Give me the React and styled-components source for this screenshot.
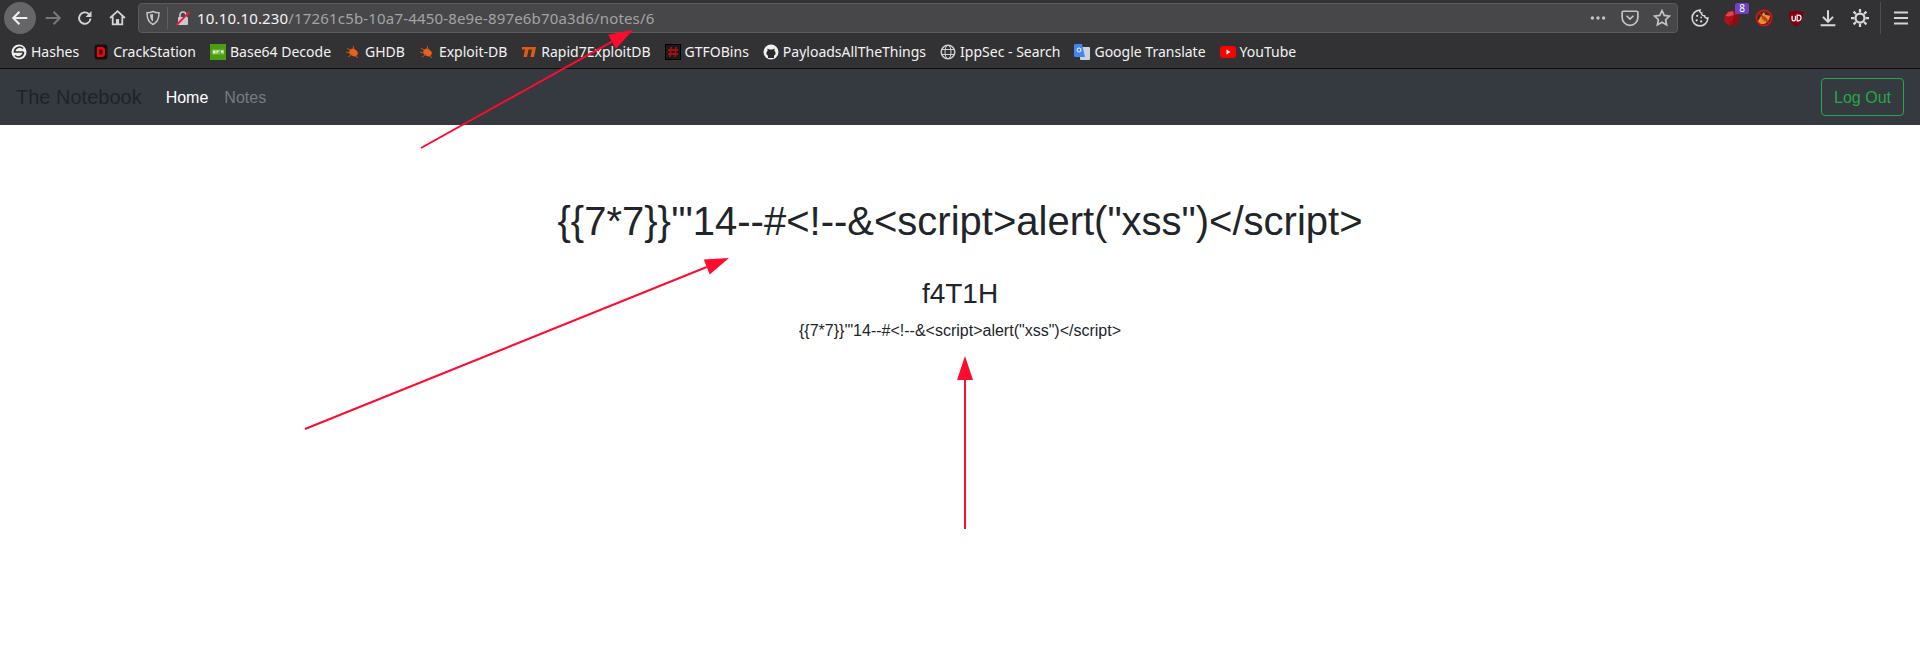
import React from "react";
import styled, { createGlobalStyle } from "styled-components";

const Global = createGlobalStyle`
  html, body { margin: 0; padding: 0; background: #fff; }
  body { font-family: "Liberation Sans", Arial, sans-serif; }
`;

const Page = styled.div`
  position: relative;
  width: 1920px;
  height: 652px;
  overflow: hidden;
  background: #fff;
`;

const Toolbar = styled.div`
  height: 35px;
  background: #323234;
  display: flex;
  align-items: center;
  padding: 0 0 0 4px;
  box-sizing: border-box;
`;

const NavBtn = styled.div`
  width: ${(p) => p.$w || 32}px;
  height: 32px;
  flex: none;
  display: flex;
  align-items: center;
  justify-content: center;
  color: ${(p) => p.$color || "#d4d4d6"};
  border-radius: 50%;
  background: ${(p) => p.$bg || "transparent"};
`;

const UrlBar = styled.div`
  flex: none;
  margin-left: 5px;
  width: 1540px;
  height: 30px;
  box-sizing: border-box;
  background: #474749;
  border: 1px solid #5b5b5d;
  border-radius: 4px;
  display: flex;
  align-items: center;
  padding: 0 6px 0 0;
`;

const Shield = styled.div`
  width: 28px;
  height: 100%;
  flex: none;
  display: flex;
  align-items: center;
  justify-content: center;
`;

const Sep = styled.div`
  width: 1px;
  height: 22px;
  background: #5f5f61;
  flex: none;
`;

const Lock = styled.div`
  width: 29px;
  flex: none;
  display: flex;
  align-items: center;
  justify-content: center;
`;

const Url = styled.div`
  flex: 1;
  font-family: "Noto Sans", sans-serif;
  font-size: 15px;
  letter-spacing: 0.17px;
  color: #a3a3a5;
  white-space: nowrap;
  & b { font-weight: 400; color: #f4f4f5; }
`;

const UrlIcons = styled.div`
  display: flex;
  align-items: center;
  gap: 14px;
  color: #c4c4c6;
`;

const Ext = styled.div`
  width: 32px;
  height: 32px;
  flex: none;
  display: flex;
  align-items: center;
  justify-content: center;
  position: relative;
`;

const ExtRow = styled.div`
  display: flex;
  align-items: center;
  margin-left: 6px;
  color: #d8d8da;
`;

const Badge = styled.span`
  position: absolute;
  top: 1px;
  right: -1px;
  background: #6f42c1;
  color: #fff;
  font-family: "Noto Sans", sans-serif;
  font-size: 10px;
  line-height: 11px;
  padding: 0 4px;
  border-radius: 2px;
`;

const Divider = styled.div`
  width: 1px;
  height: 32px;
  background: #4d4d4f;
  margin: 0 0 0 4px;
  flex: none;
`;

const Bookmarks = styled.div`
  height: 34px;
  background: #323234;
  display: flex;
  align-items: center;
  padding: 0 0 0 11px;
  box-sizing: border-box;
  gap: 14px;
  border-bottom: 1px solid #0c0c0d;
`;

const Mark = styled.div`
  display: flex;
  align-items: center;
  gap: 4px;
  font-family: "Noto Sans", sans-serif;
  font-size: 14px;
  color: #f2f2f3;
  white-space: nowrap;
`;

const Navbar = styled.nav`
  height: 56px;
  background: #343a40;
  display: flex;
  align-items: center;
  padding: 0 16px;
  box-sizing: border-box;
`;

const Brand = styled.div`
  font-size: 20px;
  color: #1f2327;
  margin-right: 16px;
`;

const NavLink = styled.div`
  font-size: 16px;
  padding: 1px 8px 0;
  color: ${(p) => (p.$active ? "#ffffff" : "#777c81")};
`;

const LogOut = styled.button`
  margin-left: auto;
  height: 38px;
  padding: 1px 12px 0;
  font: 16px "Liberation Sans", Arial, sans-serif;
  background: transparent;
  color: #28a745;
  border: 1px solid #28a745;
  border-radius: 4px;
`;

const Content = styled.main`
  text-align: center;
  color: #212529;
  padding-top: 72px;
`;

const Title = styled.h1`
  font-size: 40px;
  font-weight: 400;
  line-height: 48px;
  margin: 0 0 32px;
`;

const Author = styled.h3`
  font-size: 28px;
  font-weight: 400;
  line-height: 34px;
  margin: 0 0 8px;
`;

const Body = styled.p`
  font-size: 16px;
  line-height: 24px;
  margin: 0;
`;

const Arrows = styled.svg`
  position: absolute;
  inset: 0;
  pointer-events: none;
`;

const Arrow = ({ x1, y1, x2, y2 }) => {
  const a = Math.atan2(y2 - y1, x2 - x1);
  const L = 24, W = 8;
  const bx = x2 - L * Math.cos(a), by = y2 - L * Math.sin(a);
  const nx = -Math.sin(a) * W, ny = Math.cos(a) * W;
  return (
    <g>
      <line x1={x1} y1={y1} x2={bx} y2={by} stroke="#ff0b2d" strokeWidth="2" />
      <polygon points={`${x2},${y2} ${bx + nx},${by + ny} ${bx - nx},${by - ny}`} fill="#ff0b2d" />
    </g>
  );
};

const S = ({ size = 16, children, vb = "0 0 16 16" }) => (
  <svg width={size} height={size} viewBox={vb} style={{ display: "block" }}>{children}</svg>
);

const Bug = () => (
  <S>
    <ellipse cx="8.500" cy="8.500" rx="4.500" ry="3.500" fill="#e8601a" transform="rotate(35 8.500 8.500)" />
    <path d="M2 4l3 2M1 8l4 1M3 13l3-2M8 2l1 3M13 14l-2-2" stroke="#c9541a" strokeWidth="1" fill="none" />
  </S>
);

const marks = [
  ["Hashes", <S key="h"><circle cx="8" cy="8" r="7.500" fill="#f0f0f0" /><path d="M12 4.500A5 5 0 0 0 3.500 8h9M4 11.500A5 5 0 0 0 12.500 8" stroke="#323234" strokeWidth="1.700" fill="none" /></S>],
  ["CrackStation", <S key="c"><rect x="1.500" y="0.500" width="13" height="15" rx="3" fill="#111" /><path fillRule="evenodd" d="M4 3h4.500a3.500 3.500 0 0 1 3.500 3.500v3A3.500 3.500 0 0 1 8.500 13H4zM6.500 5.500v5h1.500a1.500 1.500 0 0 0 1.500-1.500V7A1.500 1.500 0 0 0 8 5.500z" fill="#f00" /></S>],
  ["Base64 Decode", <S key="b"><rect width="16" height="16" fill="#4b9e14" /><rect x="2" y="5.500" width="12" height="5" fill="#8fce5e" opacity=".6" /><path d="M3 6.500h2.500v3H3zM6.500 6.500h3v1h-2v2h-1zM11 6.500v2h1.500v1h1v-3z" fill="#f4ffe8" /></S>],
  ["GHDB", <Bug key="g" />],
  ["Exploit-DB", <Bug key="e" />],
  ["Rapid7ExploitDB", <S key="r"><path d="M1 3h14l-2 10H9.500l1.500-7.500H7.500L6 13H2.500L4 5.500H1z" fill="#e5590f" /></S>],
  ["GTFOBins", <S key="t"><rect x=".5" y=".5" width="15" height="15" fill="#1a1a1a" stroke="#000" /><path d="M6 3L5 13M11 3l-1 10M3 6h10M3 10h10" stroke="#a11010" strokeWidth="1.800" /></S>],
  ["PayloadsAllTheThings", <S key="p"><circle cx="8" cy="8" r="7.500" fill="#f0f0f0" /><path d="M5 14v-2.500C3 11 3 8 4.500 7V4.500l2 1h3l2-1V7c1.500 1 1.500 4-.5 4.500V14z" fill="#2a2a2c" /></S>],
  ["IppSec - Search", <S key="i"><circle cx="8" cy="8" r="6.800" fill="none" stroke="#cfcfd1" strokeWidth="1.500" /><ellipse cx="8" cy="8" rx="3" ry="6.800" fill="none" stroke="#cfcfd1" /><path d="M1.500 5.500h13M1.500 10.500h13" stroke="#cfcfd1" /></S>],
  ["Google Translate", <S key="t2"><rect x="6" y="3" width="10" height="13" rx="1" fill="#cfd4da" /><path d="M0 1.500A1.500 1.500 0 0 1 1.500 0H8l3 13H1.500A1.500 1.500 0 0 1 0 11.500z" fill="#4285f4" /><circle cx="5" cy="6" r="2" fill="none" stroke="#fff" strokeWidth="1" /></S>],
  ["YouTube", <S key="y"><rect y="2" width="16" height="12" rx="3" fill="#f00" /><path d="M6.500 5.500v5l4-2.500z" fill="#fff" /></S>],
];

export default function App() {
  return (
    <Page>
      <Global />
      <Toolbar>
        <NavBtn $bg="#666668" $color="#efeff0">
          <S size={18}><path d="M14.500 8H2.500M7.500 2.500L2 8l5.500 5.500" stroke="currentColor" strokeWidth="1.800" fill="none" /></S>
        </NavBtn>
        <NavBtn $w={33} $color="#77777a">
          <S size={18}><path d="M1.500 8h12M8.500 2.500L14 8l-5.500 5.500" stroke="currentColor" strokeWidth="1.800" fill="none" /></S>
        </NavBtn>
        <NavBtn>
          <S size={16}><path d="M13.500 8.500A5.700 5.700 0 1 1 11.800 4" stroke="currentColor" strokeWidth="1.900" fill="none" /><path d="M14.500 1v6h-6z" fill="currentColor" /></S>
        </NavBtn>
        <NavBtn>
          <S size={17}><path d="M1 8.500L8 2l7 6.500M3.500 7v7.500h9V7" stroke="currentColor" strokeWidth="1.700" fill="none" /><rect x="6.500" y="9.500" width="3" height="5" fill="currentColor" /></S>
        </NavBtn>
        <UrlBar>
          <Shield>
            <S size={16}><path d="M8 1.500c2 1 4 1.300 6 1.300 0 6-1.500 9.700-6 11.700C3.500 12.500 2 8.800 2 2.800c2 0 4-.3 6-1.300z" stroke="#c4c4c6" strokeWidth="1.500" fill="none" /><path d="M8 4v7.500c-2-1-3-3.500-3-7 1 0 2-.2 3-.5z" fill="#c4c4c6" /></S>
          </Shield>
          <Sep />
          <Lock>
            <S size={16}>
              <rect x="3" y="7" width="10" height="8" rx="1" fill="#c9c9cb" />
              <path d="M5 7V5a3 3 0 0 1 6 0v2" stroke="#c9c9cb" strokeWidth="1.600" fill="none" />
              <path d="M1.500 15L14.500 2" stroke="#f2163d" strokeWidth="1.800" />
            </S>
          </Lock>
          <Url><b>10.10.10.230</b>/17261c5b-10a7-4450-8e9e-897e6b70a3d6/notes/6</Url>
          <UrlIcons>
            <S size={18}><circle cx="3" cy="8" r="1.500" fill="currentColor" /><circle cx="8" cy="8" r="1.500" fill="currentColor" /><circle cx="13" cy="8" r="1.500" fill="currentColor" /></S>
            <S size={18}><path d="M2 2h12a1 1 0 0 1 1 1v4.500a7 7 0 0 1-14 0V3a1 1 0 0 1 1-1z" stroke="currentColor" strokeWidth="1.500" fill="none" /><path d="M5 6l3 3 3-3" stroke="currentColor" strokeWidth="1.500" fill="none" /></S>
            <S size={18}><path d="M8 1.500l2 4.200 4.600.6-3.400 3.200.9 4.600L8 11.800l-4.100 2.300.9-4.600L1.400 6.300 6 5.700z" stroke="currentColor" strokeWidth="1.500" fill="none" /></S>
          </UrlIcons>
        </UrlBar>
        <ExtRow>
          <Ext>
            <S size={18}><path d="M8 1a7 7 0 1 0 7 7c-1.500.5-3-.5-3-2-1.500 0-3-1-2.500-2.500C8 3.500 7.500 2 8 1z" stroke="currentColor" strokeWidth="1.400" fill="none" /><circle cx="5.500" cy="6" r="1" fill="currentColor" /><circle cx="5" cy="10" r="1" fill="currentColor" /><circle cx="9" cy="11" r="1" fill="currentColor" /><circle cx="9" cy="7.500" r=".8" fill="currentColor" /></S>
          </Ext>
          <Ext>
            <S size={18}>
              <path d="M4.500 2.500L9 1.500l5 3.500-1 8-7 2L1 11l.5-5z" fill="#b3101a" />
              <path d="M1.500 6.500l4 .5 4.500-1.500L9 1.500 4.500 2.500zM5.500 7l1 7.500" fill="#e0444c" stroke="#8a0a12" strokeWidth=".5" />
              <path d="M10 5.500l4-.5-1 8-6.500 2z" fill="#8f0b13" />
            </S>
            <Badge>8</Badge>
          </Ext>
          <Ext>
            <S size={18}>
              <circle cx="8" cy="8" r="7" fill="#3a2a28" />
              <path d="M2.500 11L6 5l2-2.500L9 5l4.500 1-1 3.500L9 13l-4 .5z" fill="#e8912b" />
              <path d="M6 8l3 3M8 6.500l3 3" stroke="#a85c12" strokeWidth="1" />
              <circle cx="8" cy="8" r="6.800" fill="none" stroke="#d5121e" strokeWidth="1.500" />
              <path d="M3.200 3.200l9.600 9.600" stroke="#d5121e" strokeWidth="1.300" />
            </S>
          </Ext>
          <Ext>
            <S size={18}><path d="M8 1c2 1 4 1.500 6.500 1.500C14.500 9 13 13 8 15.500 3 13 1.500 9 1.500 2.500 4 2.500 6 2 8 1z" fill="#800010" /><path d="M4.500 6v3a1.500 1.500 0 0 0 3 0V6M9 5.500v5h1a2.500 2.500 0 0 0 0-5z" stroke="#fff" strokeWidth="1.100" fill="none" /></S>
          </Ext>
          <Ext>
            <S size={18}><path d="M8 1v10M3.500 7L8 11.500 12.500 7M1.500 14.500h13" stroke="currentColor" strokeWidth="1.800" fill="none" /></S>
          </Ext>
          <Ext>
            <S size={18}><circle cx="8" cy="8" r="4" stroke="currentColor" strokeWidth="2" fill="none" /><path d="M8 0v3M8 13v3M0 8h3M13 8h3M2.300 2.300l2.100 2.100M11.600 11.600l2.100 2.100M2.300 13.700l2.100-2.100M11.600 4.400l2.100-2.100" stroke="currentColor" strokeWidth="2" /></S>
          </Ext>
          <Divider />
          <NavBtn $w={40}>
            <S size={16}><path d="M1 2.500h14M1 8h14M1 13.500h14" stroke="currentColor" strokeWidth="2" /></S>
          </NavBtn>
        </ExtRow>
      </Toolbar>
      <Bookmarks>
        {marks.map(([label, icon]) => (
          <Mark key={label}>{icon}{label}</Mark>
        ))}
      </Bookmarks>
      <Navbar>
        <Brand>The Notebook</Brand>
        <NavLink $active>Home</NavLink>
        <NavLink>Notes</NavLink>
        <LogOut>Log Out</LogOut>
      </Navbar>
      <Content>
        <Title>{`{{7*7}}'"14--#<!--&<script>alert("xss")</script>`}</Title>
        <Author>f4T1H</Author>
        <Body>{`{{7*7}}'"14--#<!--&<script>alert("xss")</script>`}</Body>
      </Content>
      <Arrows width="1920" height="652">
        <Arrow x1={421} y1={148} x2={633} y2={30} />
        <Arrow x1={305} y1={429} x2={729} y2={258} />
        <Arrow x1={965} y1={529} x2={965} y2={356} />
      </Arrows>
    </Page>
  );
}
